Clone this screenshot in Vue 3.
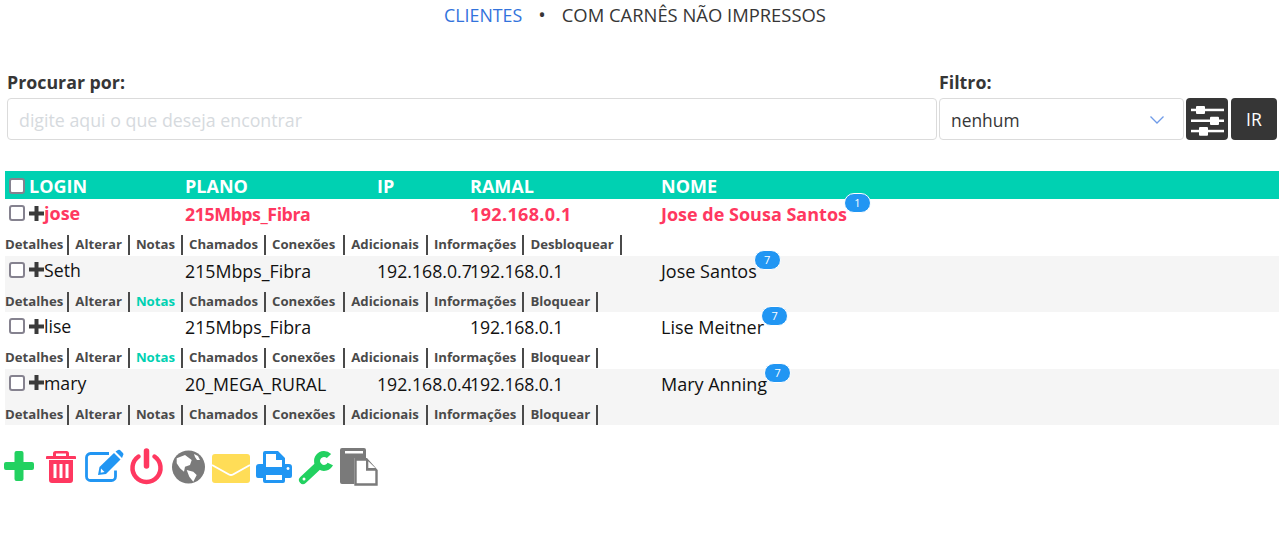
<script setup>
const columns = ['PLANO', 'IP', 'RAMAL', 'NOME']

const rows = [
  { login: 'jose', plano: '215Mbps_Fibra', ip: '', ramal: '192.168.0.1', nome: 'Jose de Sousa Santos', badge: 1, alert: true, last: 'Desbloquear' },
  { login: 'Seth', plano: '215Mbps_Fibra', ip: '192.168.0.7', ramal: '192.168.0.1', nome: 'Jose Santos', badge: 7, notas: true, last: 'Bloquear' },
  { login: 'lise', plano: '215Mbps_Fibra', ip: '', ramal: '192.168.0.1', nome: 'Lise Meitner', badge: 7, notas: true, last: 'Bloquear' },
  { login: 'mary', plano: '20_MEGA_RURAL', ip: '192.168.0.4', ramal: '192.168.0.1', nome: 'Mary Anning', badge: 7, last: 'Bloquear' },
]

function linksFor(row) {
  return ['Detalhes', 'Alterar', 'Notas', 'Chamados', 'Conexões', 'Adicionais', 'Informações', row.last]
}
</script>

<template>
  <div class="page">
    <nav class="crumbs">
      <a class="crumb-link">CLIENTES</a>
      <span class="dot">•</span>
      <span>COM CARNÊS NÃO IMPRESSOS</span>
    </nav>

    <div class="search">
      <div class="field grow">
        <label>Procurar por:</label>
        <input type="text" placeholder="digite aqui o que deseja encontrar" />
      </div>
      <div class="field filter">
        <label>Filtro:</label>
        <div class="select">
          <span>nenhum</span>
          <svg width="16" height="10" viewBox="0 0 16 10"><path d="M1.500 1.500 8 8l6.500-6.500" fill="none" stroke="#6f9be8" stroke-width="1.300" /></svg>
        </div>
      </div>
      <button class="btn square" aria-label="Ajustes">
        <svg width="42" height="42" viewBox="0 0 42 42">
          <g fill="#fff">
            <rect x="5" y="10.700" width="33" height="2.500" />
            <rect x="5" y="21.500" width="33" height="2.500" />
            <rect x="5" y="31.800" width="33" height="2.500" />
            <rect x="10" y="8" width="9" height="8" rx="1" />
            <rect x="24" y="18.700" width="9" height="8.300" rx="1" />
            <rect x="13" y="29" width="9" height="8.700" rx="1" />
          </g>
        </svg>
      </button>
      <button class="btn go">IR</button>
    </div>

    <div class="table">
      <div class="row head">
        <div class="cell first"><span class="check"></span>LOGIN</div>
        <div v-for="c in columns" :key="c" class="cell">{{ c }}</div>
      </div>
      <div v-for="(row, i) in rows" :key="row.login" class="item" :class="{ alert: row.alert, odd: i % 2 === 1 }">
        <div class="row">
          <div class="cell first">
            <span class="check"></span>
            <svg class="mini-plus" width="15" height="15" viewBox="0 0 15 15"><path d="M5.500 0h4v5.500H15v4H9.500V15h-4V9.500H0v-4h5.500z" fill="#3a3a3a" /></svg>{{ row.login }}
          </div>
          <div class="cell plano">{{ row.plano }}</div>
          <div class="cell">{{ row.ip }}</div>
          <div class="cell ramal">{{ row.ramal }}</div>
          <div class="cell name"><span class="name-text">{{ row.nome }}<span class="badge">{{ row.badge }}</span></span></div>
        </div>
        <div class="links">
          <a v-for="l in linksFor(row)" :key="l" :class="{ on: l === 'Notas' && row.notas }">{{ l }}</a>
        </div>
      </div>
    </div>

    <div class="tools">
      <!-- plus -->
      <svg width="36" height="40" viewBox="0 0 36 40"><path d="M13.500 6a2 2 0 0 1 2-2h5a2 2 0 0 1 2 2v9H31a2 2 0 0 1 2 2v4a2 2 0 0 1-2 2h-8.500v9a2 2 0 0 1-2 2h-5a2 2 0 0 1-2-2V23H5a2 2 0 0 1-2-2v-4a2 2 0 0 1 2-2h8.500z" fill="#22d160" /></svg>
      <!-- trash -->
      <svg width="36" height="40" viewBox="0 0 36 40"><path d="M10 9V6.500A2.500 2.500 0 0 1 12.500 4h11A2.500 2.500 0 0 1 26 6.500V9h6a1 1 0 0 1 1 1v2H3v-2a1 1 0 0 1 1-1zm3 0h10V6.500H13zM6 13h24v20a3 3 0 0 1-3 3H9a3 3 0 0 1-3-3zm4.500 4v14h3V17zm6 0v14h3V17zm6 0v14h3V17z" fill="#ff3860" fill-rule="evenodd" /></svg>
      <!-- edit -->
      <svg width="39" height="40" viewBox="0 0 39 40">
        <path d="M30.500 24v6a4 4 0 0 1-4 4H5.500a4 4 0 0 1-4-4V11a4 4 0 0 1 4-4H24" transform="translate(0 -.5)" fill="none" stroke="#2196f3" stroke-width="2.800" />
        <path d="M13 28l1.500-8L29 6l6.500 6.500L21 27z" fill="#2196f3" />
        <path d="M16 21.500l3.500 3.500-3.800.700z" fill="#fff" />
        <path d="M30.500 4.500l2.500-1.500a2 2 0 0 1 2 0l3 3a2 2 0 0 1 0 2.500L37 11z" fill="#2196f3" />
      </svg>
      <!-- power -->
      <svg width="36" height="40" viewBox="0 0 36 40">
        <path d="M8.500 9.500a14 14 0 1 0 16 0" fill="none" stroke="#ff3860" stroke-width="4.500" stroke-linecap="round" />
        <path d="M16.500 4v15" fill="none" stroke="#ff3860" stroke-width="5.500" stroke-linecap="round" />
      </svg>
      <!-- globe -->
      <svg width="33" height="40" viewBox="0 0 33 40">
        <circle cx="16.500" cy="20" r="16.500" fill="#7a7a7a" />
        <path d="M4.700 11.300 13 8l6.700 5L18 18l-5 1.700-1 5-4-3.400-3.300-5zM14.700 23l6.600 1.700 3.400 3.300-3.400 6.700-4-5zM22 7l4 2 2 4-3 0-2-3z" fill="#fff" />
      </svg>
      <!-- mail -->
      <svg width="39" height="40" viewBox="0 0 39 40">
        <rect x="1" y="7" width="38" height="29" rx="3" fill="#ffdd57" />
        <path d="M1 18l17 9.500a4 4 0 0 0 4 0L39 18" fill="none" stroke="#fff" stroke-width="2" />
      </svg>
      <!-- print -->
      <svg width="36" height="40" viewBox="0 0 36 40">
        <path d="M9 4h13l7 7v6h4a3 3 0 0 1 3 3v9a2 2 0 0 1-2 2h-5v3a2 2 0 0 1-2 2H9a2 2 0 0 1-2-2v-3H2a2 2 0 0 1-2-2v-9a3 3 0 0 1 3-3h4V6a2 2 0 0 1 2-2zm1 3v13h16v-7h-6V7zm0 21v5h16v-5zm22-8a1.500 1.500 0 1 0 .01 0z" fill="#2196f3" fill-rule="evenodd" />
      </svg>
      <!-- wrench -->
      <svg width="36" height="40" viewBox="0 0 36 40">
        <path d="M31 9A7 7 0 1 0 32.300 17" fill="none" stroke="#22d160" stroke-width="6" />
        <path d="M5 33 20 19" fill="none" stroke="#22d160" stroke-width="8" stroke-linecap="round" />
        <circle cx="6" cy="32" r="1.500" fill="#fff" />
      </svg>
      <!-- paste -->
      <svg width="38" height="40" viewBox="0 0 38 40">
        <path d="M2 1h22a2 2 0 0 1 2 2v8H14.300v26H2a2 2 0 0 1-2-2V3a2 2 0 0 1 2-2zm3 3v2.500h18V4z" fill="#7a7a7a" fill-rule="evenodd" />
        <path d="M14.300 11H27l10.700 12v15.700H14.300zM16.700 13.700v22.600h18.600V23.700H26v-10zM28.300 14.300v6.700h7z" fill="#7a7a7a" fill-rule="evenodd" />
      </svg>
    </div>
  </div>
</template>

<style scoped>
.page {
  font-family: "Open Sans", "Noto Sans", sans-serif;
  color: #111;
  height: 553px;
  overflow: hidden;
}

.crumbs {
  display: flex;
  justify-content: center;
  gap: 16px;
  padding: 4px 10px 0 0;
  height: 70px;
  box-sizing: border-box;
  font-size: 18.400px;
  line-height: 22px;
  color: #363636;
}

.crumb-link {
  color: #3273dc;
  font-size: 17.800px;
}

.dot {
  font-size: 20px;
}

.search {
  display: flex;
  align-items: flex-end;
  padding: 0 3px 0 7px;
  height: 70px;
  margin-bottom: 31px;
}

.field {
  display: flex;
  flex-direction: column;
}

.grow {
  width: 930px;
  margin-right: 2px;
}

.filter {
  width: 245px;
  margin-right: 2px;
}

label {
  font-size: 17.800px;
  font-weight: 700;
  line-height: 24px;
  color: #363636;
  margin-bottom: 4px;
}

input, .select {
  box-sizing: border-box;
  height: 42px;
  border: 1px solid #dbdbdb;
  border-radius: 4px;
  font-family: inherit;
  font-size: 17.800px;
  padding: 2px 11px 0;
  background: #fff;
  outline: none;
}

input::placeholder {
  color: #d6dade;
}

.select {
  display: flex;
  align-items: center;
  justify-content: space-between;
  padding-right: 18px;
  color: #363636;
  font-size: 17.400px;
}

.btn {
  height: 42px;
  border: 0;
  border-radius: 4px;
  background: #363636;
  color: #fff;
  padding: 0;
  font-family: inherit;
}

.square {
  width: 42px;
  margin-right: 3px;
}

.square svg {
  display: block;
}

.go {
  width: 46px;
  font-size: 17.600px;
}

.table {
  margin: 0 1px 0 5px;
}

.row {
  display: grid;
  grid-template-columns: 180px 192px 93px 191px 1fr;
  font-size: 17.700px;
  line-height: 28px;
  height: 28px;
}

.head {
  background: #00d1b2;
  color: #fff;
  font-weight: 700;
  font-size: 18px;
}

.cell {
  white-space: nowrap;
  padding-top: 1px;
}

.first {
  display: flex;
  align-items: center;
  padding-left: 4px;
  padding-top: 0;
  height: 30px;
  margin-top: -1px;
}

.head .first {
  height: 28px;
  margin-top: 1px;
}

.check {
  box-sizing: border-box;
  display: inline-block;
  width: 16px;
  height: 16px;
  background: #fff;
  border: 2px solid #85828f;
  border-radius: 3px;
  margin-right: 4px;
}

.mini-plus {
  flex: none;
}

.item {
  height: 56.500px;
}

.odd {
  background: #f5f5f5;
}

.alert {
  color: #ff3860;
  font-weight: 700;
}

.alert .row {
  font-size: 18px;
}

.plano {
  font-size: 17.800px;
}

.ramal {
  letter-spacing: -0.15px;
}

.alert .plano {
  letter-spacing: -0.45px;
}

.alert .ramal {
  letter-spacing: 0.35px;
}

.name {
  font-size: 18px;
}

.name-text {
  position: relative;
  display: inline-block;
}

.badge {
  position: absolute;
  left: 100%;
  top: -7px;
  margin-left: -3px;
  width: 27px;
  height: 20px;
  box-sizing: border-box;
  border: 1px solid #fff;
  border-radius: 10px;
  background: #2196f3;
  color: #fff;
  font-size: 11px;
  font-weight: 400;
  line-height: 18px;
  letter-spacing: 0;
  text-align: center;
}

.links {
  display: flex;
  padding-top: 8px;
  height: 28px;
  box-sizing: border-box;
  font-size: 13.200px;
  font-weight: 700;
  line-height: 18px;
  color: #4a4a4a;
}

.links a {
  border-right: 2px solid #4a4a4a;
  padding-right: 6px;
  margin-right: 6px;
}

.links a:nth-child(1) {
  padding-right: 4px;
}

.links a:nth-child(5) {
  padding-right: 8px;
}

.links a:nth-child(6) {
  padding-right: 7px;
}

.links a.on {
  color: #00d1b2;
}

.tools {
  display: flex;
  align-items: flex-start;
  gap: 6px;
  padding: 22px 0 0 1px;
}

.tools svg {
  flex: none;
  overflow: visible;
}
</style>
